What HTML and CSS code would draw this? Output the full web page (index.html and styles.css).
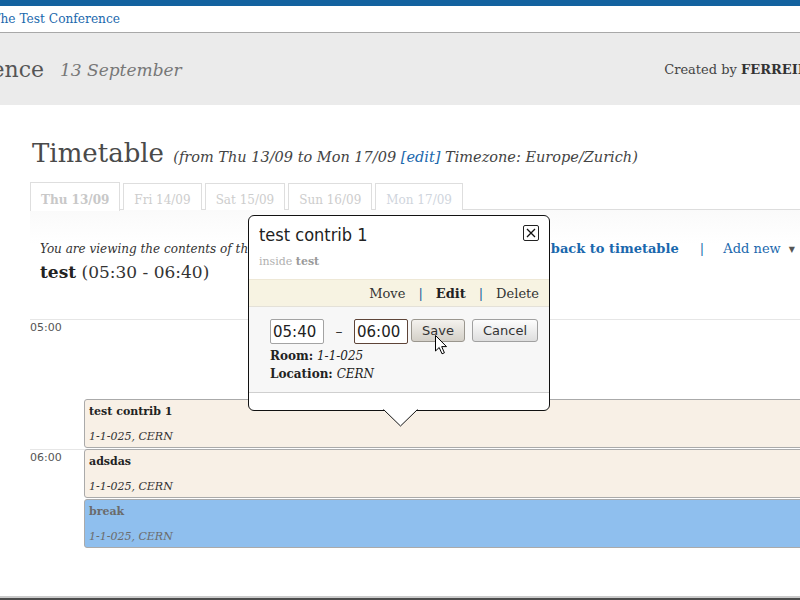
FILE: index.html
```html
<!DOCTYPE html>
<html>
<head>
<meta charset="utf-8">
<link rel="stylesheet" href="styles.css">
</head>
<body>
<div class="page">
  <div class="topbar"></div>
  <div class="navbar">
    <div class="crumb"><a class="link">The Test Conference</a></div>
  </div>
  <div class="header">
    <div class="conf-title"><span>The Test Conference</span></div>
    <div class="conf-date">13 September</div>
    <div class="created">Created by <b>FERREIRA, Pedro</b></div>
  </div>
  <div class="content">
    <h1 class="tt-title">Timetable <span class="tt-sub">(from Thu 13/09 to Mon 17/09 <a class="link">[edit]</a> Timezone: Europe/Zurich)</span></h1>
    <div class="tabs">
      <div class="tab active">Thu 13/09</div>
      <div class="tab">Fri 14/09</div>
      <div class="tab">Sat 15/09</div>
      <div class="tab">Sun 16/09</div>
      <div class="tab">Mon 17/09</div>
    </div>
    <div class="tab-body">
      <div class="info-row">
        <span class="viewing">You are viewing the contents of the session:</span>
        <div class="actions">
          <a class="link back">back to timetable</a>
          <span class="bar">|</span>
          <a class="link">Add new</a>
          <span class="caret">&#9660;</span>
        </div>
      </div>
      <div class="session"><b>test</b> (05:30 - 06:40)</div>
      <div class="timeline">
        <div class="hour"><span class="hlabel">05:00</span></div>
        <div class="hour"><span class="hlabel">06:00</span></div>
        <div class="block b1">
          <div class="btitle">test contrib 1</div>
          <div class="bloc">1-1-025, CERN</div>
        </div>
        <div class="block b2">
          <div class="btitle">adsdas</div>
          <div class="bloc">1-1-025, CERN</div>
        </div>
        <div class="block b3 brk">
          <div class="btitle">break</div>
          <div class="bloc">1-1-025, CERN</div>
        </div>
      </div>
    </div>
  </div>
  <div class="bottombar"></div>

  <div class="popup">
    <div class="pop-head">
      <div class="pop-title-row">
        <div class="pop-title">test contrib 1</div>
        <div class="close">
          <svg width="14" height="14" viewBox="0 0 14 14"><path d="M3 3 L11 11 M11 3 L3 11" stroke="#111" stroke-width="1.3" fill="none"/></svg>
        </div>
      </div>
      <div class="pop-sub">inside <b>test</b></div>
    </div>
    <div class="pop-actions">
      <span>Move</span><span class="psep">|</span><b>Edit</b><span class="psep">|</span><span>Delete</span>
    </div>
    <div class="pop-edit">
      <div class="time-row">
        <input class="tinput" type="text" value="05:40">
        <span class="dash">&ndash;</span>
        <input class="tinput focus" type="text" value="06:00">
        <button class="btn save">Save</button>
        <button class="btn cancel">Cancel</button>
      </div>
      <div class="prop"><b>Room:</b> <i>1-1-025</i></div>
      <div class="prop"><b>Location:</b> <i>CERN</i></div>
    </div>
    <div class="pop-foot"></div>
    <svg class="pop-arrow" width="35" height="18" viewBox="0 0 35 18">
      <polygon points="0,0 35,0 17.5,17.5" fill="#fff"/>
      <path d="M0.5 0.5 L17.5 17 L34.5 0.5" stroke="#111" stroke-width="1" fill="none"/>
    </svg>
  </div>

  <svg class="mouse" width="13" height="20" viewBox="0 0 13 20">
    <path d="M0.5 0.5 L0.5 16 L4.2 12.5 L7 18.8 L9.4 17.8 L6.7 11.6 L11.5 11.6 Z" fill="#fff" stroke="#000" stroke-width="1"/>
  </svg>
</div>
</body>
</html>
```

FILE: styles.css
```css
html, body {
  margin: 0;
  padding: 0;
  overflow: hidden;
  background: #fff;
}
body {
  font-family: "DejaVu Serif", serif;
  color: #333;
  width: 800px;
  height: 600px;
}
.page {
  position: relative;
  width: 800px;
  height: 600px;
  display: flex;
  flex-direction: column;
}
.link {
  color: #1a68ad;
  text-decoration: none;
}
.topbar {
  height: 6px;
  background: #13629f;
  flex: none;
}
.navbar {
  height: 26px;
  border-bottom: 1px solid #a8a8a8;
  background: #fff;
  flex: none;
}
.crumb {
  width: 120px;
  display: flex;
  justify-content: flex-end;
  white-space: nowrap;
  font-size: 12.2px;
  line-height: 26px;
}
.header {
  height: 72px;
  width: 900px;
  box-sizing: border-box;
  padding-right: 30px;
  background: #ebebeb;
  display: flex;
  align-items: center;
  white-space: nowrap;
  flex: none;
}
.conf-title {
  width: 44px;
  flex: none;
  display: flex;
  justify-content: flex-end;
  font-size: 22px;
  color: #555;
}
.conf-date {
  margin-left: 16px;
  font-style: italic;
  font-size: 17px;
  color: #777;
  padding-top: 2px;
}
.created {
  margin-left: auto;
  font-size: 13px;
  color: #444;
}
.created b { color: #333; }
.content {
  flex: 1;
  padding-left: 30px;
}
.tt-title {
  margin: 33px 0 0 2px;
  height: 30px;
  font-size: 26px;
  line-height: 30px;
  font-weight: normal;
  color: #4a4a4a;
  white-space: nowrap;
}
.tt-sub {
  font-size: 14.5px;
  line-height: 1;
  font-style: italic;
  color: #444;
  margin-left: 1px;
}
.tabs {
  margin-top: 14px;
  display: flex;
  gap: 3px;
  border-bottom: 1px solid #ddd;
  height: 28px;
  box-sizing: border-box;
}
.tab {
  border: 1px solid #dedede;
  border-bottom: none;
  padding: 6px 10px 0;
  height: 27px;
  box-sizing: border-box;
  font-size: 12px;
  line-height: 20px;
  color: #cdcdcd;
  background: #fff;
  margin-top: 1px;
}
.tab.active {
  font-weight: bold;
  color: #c8c8c8;
  margin-top: 0;
  height: 29px;
  padding: 7px 10px 0;
  position: relative;
}
.tab:last-child { color: #cfd5dd; }
.tab-body {
  padding: 30px 0 0 10px;
  background: linear-gradient(#fafafa, #fff 34px);
}
.info-row {
  display: flex;
  align-items: baseline;
  line-height: 18px;
  padding-right: 5px;
  white-space: nowrap;
}
.viewing {
  font-size: 12px;
  font-style: italic;
  color: #333;
}
.actions {
  margin-left: auto;
  font-size: 13px;
}
.back { font-weight: bold; }
.bar {
  color: #1a68ad;
  margin: 0 15px 0 17px;
}
.caret {
  font-size: 8px;
  color: #555;
  margin-left: 4px;
  position: relative;
  top: -1px;
}
.session {
  margin-top: 1px;
  font-size: 17px;
  line-height: 22px;
  color: #333;
}
.session b { color: #222; }
.timeline {
  position: relative;
  margin: 36px 0 0 -10px;
}
.hour {
  height: 130px;
  border-top: 1px solid #e6e6e6;
  box-sizing: border-box;
  padding-top: 1px;
}
.hlabel {
  display: block;
  font-family: "DejaVu Sans", sans-serif;
  font-size: 11px;
  color: #555;
  line-height: 14px;
}
.block {
  position: absolute;
  left: 54px;
  right: -40px;
  height: 49px;
  box-sizing: border-box;
  border: 1px solid #aaa;
  border-radius: 3px;
  background: #f8f0e6;
  padding: 4px 4px 2px;
  display: flex;
  flex-direction: column;
  justify-content: space-between;
  font-size: 11px;
  line-height: 16px;
}
.b1 { top: 80px; }
.b2 { top: 130px; }
.b3 { top: 180px; }
.btitle { font-weight: bold; color: #222; }
.bloc { font-style: italic; color: #333; }
.brk { background: #8fbfee; }
.brk .btitle, .brk .bloc { color: #6b6b6b; }
.bottombar {
  height: 4px;
  border-top: 2px solid #cacaca;
  background: #4c4c4c;
  box-sizing: border-box;
  flex: none;
}
.popup {
  position: absolute;
  left: 248px;
  top: 215px;
  width: 302px;
  box-sizing: border-box;
  border: 1px solid #111;
  border-radius: 6px;
  background: #fff;
}
.pop-head {
  padding: 8px 10px 10px;
}
.pop-title-row {
  display: flex;
  justify-content: space-between;
  align-items: flex-start;
}
.pop-title {
  font-family: "DejaVu Sans Condensed", "DejaVu Sans", sans-serif;
  font-size: 18px;
  line-height: 22px;
  color: #222;
}
.close {
  width: 16px;
  height: 16px;
  box-sizing: border-box;
  border: 1px solid #222;
  border-radius: 2px;
  margin-top: 1px;
  display: flex;
  align-items: center;
  justify-content: center;
}
.close svg { display: block; }
.pop-sub {
  margin-top: 9px;
  font-size: 11px;
  line-height: 14px;
  color: #b0b0b0;
}
.pop-sub b { color: #9a9a9a; }
.pop-actions {
  height: 28px;
  line-height: 28px;
  background: #f7f3e2;
  border-top: 1px solid #eee8d6;
  border-bottom: 1px solid #e4e1d8;
  box-sizing: border-box;
  text-align: right;
  padding-right: 10px;
  font-size: 13px;
  color: #333;
}
.pop-actions b { color: #222; }
.psep {
  color: #1a5a9a;
  margin: 0 13px;
}
.pop-edit {
  background: #f7f7f7;
  border-bottom: 1px solid #cfcfcf;
  padding: 12px 10px 9px 21px;
}
.time-row {
  display: flex;
  align-items: flex-start;
  height: 25px;
  margin-bottom: 3px;
}
.tinput {
  width: 54px;
  height: 25px;
  box-sizing: border-box;
  border: 1px solid #a3a3a3;
  border-radius: 2px;
  padding: 0 2px;
  margin: 0;
  font-family: "DejaVu Sans", sans-serif;
  font-size: 15px;
  color: #222;
  background: #fff;
  outline: none;
}
.tinput.focus {
  border-color: #5e4438;
}
.dash {
  width: 30px;
  text-align: center;
  font-family: "DejaVu Sans", sans-serif;
  font-size: 14px;
  line-height: 25px;
  color: #333;
}
.btn {
  height: 23px;
  box-sizing: border-box;
  border: 1px solid #a0a0a0;
  border-radius: 3px;
  background: linear-gradient(#fdfdfd, #dedede);
  font-family: "DejaVu Sans", sans-serif;
  font-size: 13px;
  color: #333;
  padding: 0;
  margin: 0;
}
.save {
  width: 54px;
  margin-left: 3px;
  background: linear-gradient(#f4f2ee, #d4d0c8);
  border-color: #9a968e;
}
.cancel {
  width: 66px;
  margin-left: 7px;
}
.prop {
  font-size: 12px;
  line-height: 18px;
  color: #222;
}
.pop-foot {
  height: 17px;
}
.pop-arrow {
  position: absolute;
  left: 134px;
  top: 193px;
  display: block;
}
.mouse {
  position: absolute;
  left: 435px;
  top: 335px;
  display: block;
}
```
